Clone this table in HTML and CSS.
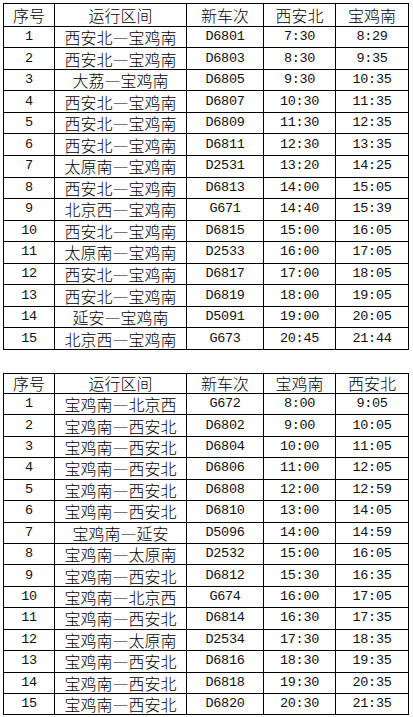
FILE: index.html
```html
<!DOCTYPE html>
<html lang="zh-CN">
<head>
<meta charset="utf-8">
<title>时刻表</title>
<link rel="stylesheet" href="styles.css">
</head>
<body>
<div class="page">
<table class="tt tt-first">
<colgroup><col class="c1"><col class="c2"><col class="c3"><col class="c4"><col class="c5"></colgroup>
<thead>
<tr class="hd"><th>序号</th><th>运行区间</th><th>新车次</th><th>西安北</th><th>宝鸡南</th></tr>
</thead>
<tbody>
<tr><td class="n">1</td><td>西安北—宝鸡南</td><td class="n">D6801</td><td class="n">7:30</td><td class="n">8:29</td></tr>
<tr><td class="n">2</td><td>西安北—宝鸡南</td><td class="n">D6803</td><td class="n">8:30</td><td class="n">9:35</td></tr>
<tr><td class="n">3</td><td>大荔—宝鸡南</td><td class="n">D6805</td><td class="n">9:30</td><td class="n">10:35</td></tr>
<tr><td class="n">4</td><td>西安北—宝鸡南</td><td class="n">D6807</td><td class="n">10:30</td><td class="n">11:35</td></tr>
<tr><td class="n">5</td><td>西安北—宝鸡南</td><td class="n">D6809</td><td class="n">11:30</td><td class="n">12:35</td></tr>
<tr><td class="n">6</td><td>西安北—宝鸡南</td><td class="n">D6811</td><td class="n">12:30</td><td class="n">13:35</td></tr>
<tr><td class="n">7</td><td>太原南—宝鸡南</td><td class="n">D2531</td><td class="n">13:20</td><td class="n">14:25</td></tr>
<tr><td class="n">8</td><td>西安北—宝鸡南</td><td class="n">D6813</td><td class="n">14:00</td><td class="n">15:05</td></tr>
<tr><td class="n">9</td><td>北京西—宝鸡南</td><td class="n">G671</td><td class="n">14:40</td><td class="n">15:39</td></tr>
<tr><td class="n">10</td><td>西安北—宝鸡南</td><td class="n">D6815</td><td class="n">15:00</td><td class="n">16:05</td></tr>
<tr><td class="n">11</td><td>太原南—宝鸡南</td><td class="n">D2533</td><td class="n">16:00</td><td class="n">17:05</td></tr>
<tr><td class="n">12</td><td>西安北—宝鸡南</td><td class="n">D6817</td><td class="n">17:00</td><td class="n">18:05</td></tr>
<tr><td class="n">13</td><td>西安北—宝鸡南</td><td class="n">D6819</td><td class="n">18:00</td><td class="n">19:05</td></tr>
<tr><td class="n">14</td><td>延安—宝鸡南</td><td class="n">D5091</td><td class="n">19:00</td><td class="n">20:05</td></tr>
<tr><td class="n">15</td><td>北京西—宝鸡南</td><td class="n">G673</td><td class="n">20:45</td><td class="n">21:44</td></tr>
</tbody>
</table>

<table class="tt tt-second">
<colgroup><col class="c1"><col class="c2"><col class="c3"><col class="c4"><col class="c5"></colgroup>
<thead>
<tr class="hd"><th>序号</th><th>运行区间</th><th>新车次</th><th>宝鸡南</th><th>西安北</th></tr>
</thead>
<tbody>
<tr><td class="n">1</td><td>宝鸡南—北京西</td><td class="n">G672</td><td class="n">8:00</td><td class="n">9:05</td></tr>
<tr><td class="n">2</td><td>宝鸡南—西安北</td><td class="n">D6802</td><td class="n">9:00</td><td class="n">10:05</td></tr>
<tr><td class="n">3</td><td>宝鸡南—西安北</td><td class="n">D6804</td><td class="n">10:00</td><td class="n">11:05</td></tr>
<tr><td class="n">4</td><td>宝鸡南—西安北</td><td class="n">D6806</td><td class="n">11:00</td><td class="n">12:05</td></tr>
<tr><td class="n">5</td><td>宝鸡南—西安北</td><td class="n">D6808</td><td class="n">12:00</td><td class="n">12:59</td></tr>
<tr><td class="n">6</td><td>宝鸡南—西安北</td><td class="n">D6810</td><td class="n">13:00</td><td class="n">14:05</td></tr>
<tr><td class="n">7</td><td>宝鸡南—延安</td><td class="n">D5096</td><td class="n">14:00</td><td class="n">14:59</td></tr>
<tr><td class="n">8</td><td>宝鸡南—太原南</td><td class="n">D2532</td><td class="n">15:00</td><td class="n">16:05</td></tr>
<tr><td class="n">9</td><td>宝鸡南—西安北</td><td class="n">D6812</td><td class="n">15:30</td><td class="n">16:35</td></tr>
<tr><td class="n">10</td><td>宝鸡南—北京西</td><td class="n">G674</td><td class="n">16:00</td><td class="n">17:05</td></tr>
<tr><td class="n">11</td><td>宝鸡南—西安北</td><td class="n">D6814</td><td class="n">16:30</td><td class="n">17:35</td></tr>
<tr><td class="n">12</td><td>宝鸡南—太原南</td><td class="n">D2534</td><td class="n">17:30</td><td class="n">18:35</td></tr>
<tr><td class="n">13</td><td>宝鸡南—西安北</td><td class="n">D6816</td><td class="n">18:30</td><td class="n">19:35</td></tr>
<tr><td class="n">14</td><td>宝鸡南—西安北</td><td class="n">D6818</td><td class="n">19:30</td><td class="n">20:35</td></tr>
<tr><td class="n">15</td><td>宝鸡南—西安北</td><td class="n">D6820</td><td class="n">20:30</td><td class="n">21:35</td></tr>
</tbody>
</table>
</div>
</body>
</html>
```

FILE: styles.css
```css
html, body {
  margin: 0;
  padding: 0;
  background: #ffffff;
}

.page {
  padding: 3px 0 0 3px;
}

.tt {
  border-collapse: collapse;
  table-layout: fixed;
  width: 405px;
  color: #000;
  font-family: "Noto Sans CJK SC", "Noto Sans", sans-serif;
  font-size: 16px;
  font-weight: 300;
}

.tt-second {
  margin-top: 23px;
}

.c1 { width: 51px; }
.c2 { width: 132px; }
.c3 { width: 77px; }
.c4 { width: 72px; }
.c5 { width: 73px; }

.tt th,
.tt td {
  border: 1px solid #000;
  padding: 0;
  text-align: center;
  vertical-align: middle;
  font-weight: 300;
  line-height: 16px;
  white-space: nowrap;
}

.tt td.n {
  font-family: "Liberation Mono", "DejaVu Sans Mono", monospace;
  font-size: 13.5px;
  letter-spacing: -0.3px;
  font-weight: 400;
  color: #111;
}

.tt-first tr { height: 21.55px; }
.tt-first tr.hd { height: 22.7px; }
.tt-second tr { height: 21.45px; }
.tt-second tr.hd { height: 20px; }
```
